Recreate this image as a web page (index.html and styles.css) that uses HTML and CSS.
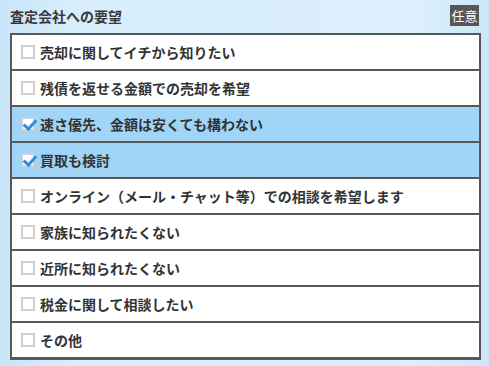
FILE: index.html
```html
<!DOCTYPE html>
<html lang="ja">
<head>
    <meta charset="UTF-8">
    <title>査定会社への要望</title>
    <link rel="stylesheet" href="styles.css">
</head>
<body>
    <div class="request-panel">
        <div class="request-header">
            <span class="request-title">査定会社への要望</span>
            <span class="optional-badge">任意</span>
        </div>
        <ul class="request-list">
            <li class="request-item"><span class="check-box"></span>売却に関してイチから知りたい</li>
            <li class="request-item"><span class="check-box"></span>残債を返せる金額での売却を希望</li>
            <li class="request-item checked"><span class="check-box"></span>速さ優先、金額は安くても構わない</li>
            <li class="request-item checked"><span class="check-box"></span>買取も検討</li>
            <li class="request-item"><span class="check-box"></span>オンライン（メール・チャット等）での相談を希望します</li>
            <li class="request-item"><span class="check-box"></span>家族に知られたくない</li>
            <li class="request-item"><span class="check-box"></span>近所に知られたくない</li>
            <li class="request-item"><span class="check-box"></span>税金に関して相談したい</li>
            <li class="request-item"><span class="check-box"></span>その他</li>
        </ul>
    </div>
</body>
</html>
```

FILE: styles.css
```css
body {
    margin: 0;
    font-family: "Noto Sans CJK JP", "Noto Sans", sans-serif;
    color: #333;
    background: linear-gradient(90deg, #c9e5f8 0%, #d8eefc 15%, #dbeffc 85%, #cde7f9 100%);
    min-height: 366px;
}

.request-panel {
    padding: 4px 8px 0 10px;
}

.request-header {
    display: flex;
    justify-content: space-between;
    align-items: center;
    height: 22px;
    margin-bottom: 7px;
    padding-right: 2px;
}

.request-title {
    font-size: 14px;
    font-weight: bold;
    color: #3a3a3a;
    padding-top: 2px;
}

.optional-badge {
    background-color: #575757;
    color: #fff;
    font-size: 13px;
    width: 29px;
    height: 21px;
    line-height: 21px;
    text-align: center;
}

.request-list {
    list-style-type: none;
    margin: 0;
    padding: 0;
    border: 2px solid #585858;
    border-bottom-width: 1px;
}

.request-item {
    display: flex;
    align-items: center;
    height: 34px;
    background-color: #fff;
    border-bottom: 2px solid #585858;
    padding-left: 9px;
    font-size: 14px;
    font-weight: bold;
    color: #333;
}

.request-item.checked {
    background-color: #a0d5f8;
}

.check-box {
    flex-shrink: 0;
    box-sizing: border-box;
    width: 14px;
    height: 14px;
    border: 2px solid #cfcfcf;
    background-color: #fff;
    margin-right: 5px;
    position: relative;
}

.checked .check-box::after {
    content: "";
    position: absolute;
    left: 3px;
    top: -2px;
    width: 5px;
    height: 10px;
    border-right: 3px solid #2b8ede;
    border-bottom: 3px solid #2b8ede;
    transform: rotate(42deg);
}
```
